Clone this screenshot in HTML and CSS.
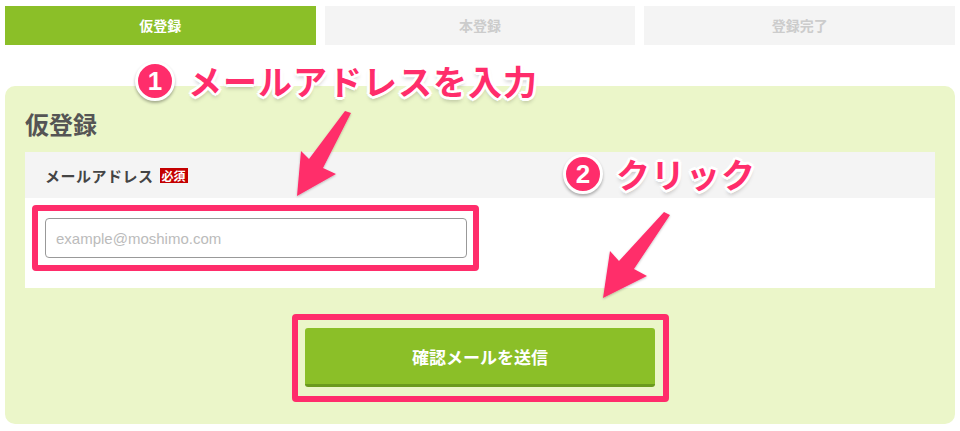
FILE: index.html
```html
<!DOCTYPE html>
<html lang="ja">
<head>
    <meta charset="UTF-8">
    <meta name="viewport" content="width=device-width, initial-scale=1.0">
    <title>仮登録</title>
    <link rel="stylesheet" href="styles.css">
</head>
<body>
<div class="page">

    <!-- Steps -->
    <ol class="steps">
        <li class="step active">仮登録</li>
        <li class="step">本登録</li>
        <li class="step">登録完了</li>
    </ol>

    <!-- Form panel -->
    <section class="panel">
        <h2 class="panel-title">仮登録</h2>
        <form class="entry" onsubmit="return false;">
            <div class="entry-head">
                <span class="entry-label">メールアドレス</span>
                <span class="badge">必須</span>
            </div>
            <div class="entry-body">
                <div class="mark">
                    <input class="field" type="email" placeholder="example@moshimo.com">
                </div>
            </div>
            <div class="actions">
                <div class="mark mark-btn">
                    <button class="send" type="submit">確認メールを送信</button>
                </div>
            </div>
        </form>
    </section>

    <!-- Annotations -->
    <div class="note note-1"><span class="num">1</span><span class="note-text">メールアドレスを入力</span></div>
    <div class="note note-2"><span class="num">2</span><span class="note-text">クリック</span></div>

    <svg class="arrows" width="960" height="431" viewBox="0 0 960 431">
        <defs>
            <filter id="sh" x="-20%" y="-20%" width="140%" height="140%">
                <feDropShadow dx="0" dy="1" stdDeviation="1" flood-color="#000" flood-opacity="0.25"/>
            </filter>
        </defs>
        <polygon filter="url(#sh)" fill="#ff2d6b" points="345,111 351,113 323,168 336,174 297,196 301,151 309,159"/>
        <polygon filter="url(#sh)" fill="#ff2d6b" points="664,212 670,215 634,269 647,276 603,298 610,251 619,261"/>
    </svg>
</div>
</body>
</html>
```

FILE: styles.css
```css
body {
    margin: 0;
    padding: 0;
    background: #fff;
    font-family: "Noto Sans CJK JP", "Noto Sans", sans-serif;
}

.page {
    position: relative;
    width: 960px;
    height: 431px;
    overflow: hidden;
}

/* Steps */
.steps {
    display: flex;
    gap: 9px;
    list-style: none;
    margin: 0;
    padding: 6px 5px 0;
}

.step {
    flex: 1;
    height: 39px;
    line-height: 39px;
    text-align: center;
    background: #f4f4f4;
    color: #cccccc;
    font-size: 14px;
    font-weight: bold;
}

.step.active {
    background: #8bbf28;
    color: #fff;
}

/* Panel */
.panel {
    margin: 41px 5px 0;
    padding: 23px 20px 37px;
    background: #ebf6c9;
    border-radius: 10px;
}

.panel-title {
    margin: 0 0 13px;
    font-size: 24px;
    line-height: 30px;
    color: #555;
}

.entry-head {
    display: flex;
    align-items: center;
    height: 46px;
    padding-left: 20px;
    background: #f4f4f4;
}

.entry-label {
    font-size: 15px;
    font-weight: bold;
    color: #444;
    letter-spacing: 0.5px;
}

.badge {
    margin-left: 6px;
    padding: 0 2px;
    height: 15px;
    line-height: 15px;
    background: #c40000;
    color: #fff;
    font-size: 12px;
    font-weight: bold;
}

.entry-body {
    height: 90px;
    padding: 20px 0 0 20px;
    box-sizing: border-box;
    background: #fff;
}

.mark {
    position: relative;
    display: inline-block;
    vertical-align: top;
}

/* Pink highlight boxes */
.mark::after {
    content: "";
    position: absolute;
    top: -13px;
    left: -13px;
    right: -12px;
    bottom: -13px;
    border: 6px solid #ff2d6b;
    border-radius: 4px;
    pointer-events: none;
}

.mark-btn::after {
    top: -14px;
    left: -13px;
    right: -14px;
    bottom: -15px;
}

.field {
    display: block;
    width: 422px;
    height: 40px;
    box-sizing: border-box;
    padding: 0 10px;
    border: 1px solid #999;
    border-radius: 4px;
    font-family: "Liberation Sans", Arial, sans-serif;
    font-size: 15px;
    color: #333;
    outline: none;
}

.field::placeholder {
    color: #bbb;
}

.actions {
    margin-top: 40px;
    text-align: center;
}

.send {
    display: block;
    width: 350px;
    height: 59px;
    border: none;
    border-bottom: 3px solid #6b9a1e;
    border-radius: 3px;
    background: #8bbf28;
    color: #fff;
    font-family: "Noto Sans CJK JP", sans-serif;
    font-size: 17px;
    font-weight: bold;
    cursor: pointer;
}

/* Annotations */
.note {
    position: absolute;
    display: flex;
    align-items: center;
    gap: 13px;
    color: #ff2d6b;
    font-size: 34px;
    font-weight: bold;
    line-height: 40px;
}

.note-1 {
    left: 135px;
    top: 61px;
}

.note-2 {
    left: 563px;
    top: 154px;
}

.note-text {
    letter-spacing: 1px;
    text-shadow:
        -3px 0 0 #fff, 3px 0 0 #fff, 0 -3px 0 #fff, 0 3px 0 #fff,
        -2px -2px 0 #fff, 2px -2px 0 #fff, -2px 2px 0 #fff, 2px 2px 0 #fff,
        0 4px 4px rgba(0, 0, 0, 0.25);
}

.num {
    width: 34px;
    height: 34px;
    border: 3px solid #fff;
    border-radius: 50%;
    background: #ff2d6b;
    color: #fff;
    font-family: "Liberation Sans", Arial, sans-serif;
    font-size: 26px;
    line-height: 34px;
    text-align: center;
    box-shadow: 0 2px 3px rgba(0, 0, 0, 0.3);
}

.arrows {
    position: absolute;
    top: 0;
    left: 0;
    pointer-events: none;
}
```
